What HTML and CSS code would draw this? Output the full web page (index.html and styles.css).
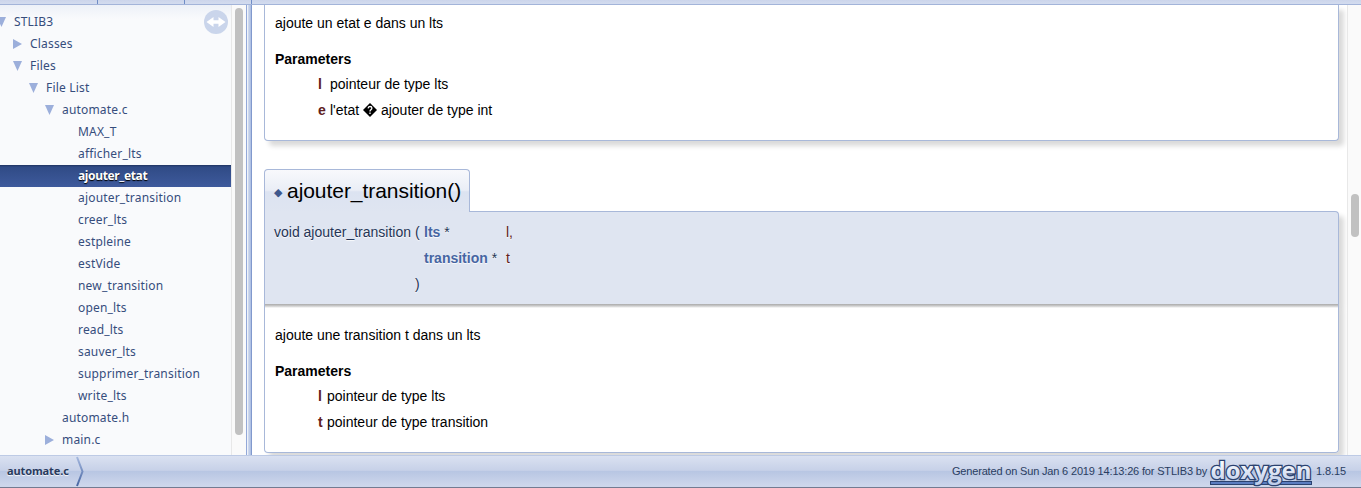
FILE: index.html
```html
<!DOCTYPE html>
<html lang="fr">
<head>
<meta charset="utf-8">
<title>STLIB3: automate.c</title>
<link rel="stylesheet" href="styles.css">
</head>
<body>
<div class="tabs"><i></i><i></i><i></i></div>
<div class="body">
  <nav class="side">
    <svg class="sync" width="24" height="24" viewBox="0 0 24 24"><circle cx="12" cy="12" r="12" fill="#cad5eb"/><path d="M2.500 12L9.500 7V10.300H14.500V7L21.500 12L14.500 17V13.700H9.500V17Z" fill="#fff"/></svg>
    <ul class="tree">
      <li class="l0 open"><span>STLIB3</span></li>
      <li class="l1 closed"><span>Classes</span></li>
      <li class="l1 open"><span>Files</span></li>
      <li class="l2 open"><span>File List</span></li>
      <li class="l3 open"><span>automate.c</span></li>
      <li class="l4"><span>MAX_T</span></li>
      <li class="l4"><span>afficher_lts</span></li>
      <li class="l4 selected"><span>ajouter_etat</span></li>
      <li class="l4"><span>ajouter_transition</span></li>
      <li class="l4"><span>creer_lts</span></li>
      <li class="l4"><span>estpleine</span></li>
      <li class="l4"><span>estVide</span></li>
      <li class="l4"><span>new_transition</span></li>
      <li class="l4"><span>open_lts</span></li>
      <li class="l4"><span>read_lts</span></li>
      <li class="l4"><span>sauver_lts</span></li>
      <li class="l4"><span>supprimer_transition</span></li>
      <li class="l4"><span>write_lts</span></li>
      <li class="l3"><span>automate.h</span></li>
      <li class="l3 closed"><span>main.c</span></li>
    </ul>
  </nav>
  <div class="scroll side-scroll"><b></b></div>
  <div class="splitter"></div>
  <main class="doc">
    <section class="card first">
      <p>ajoute un etat e dans un lts</p>
      <h3>Parameters</h3>
      <dl>
        <dt>l</dt><dd>pointeur de type lts</dd>
        <dt>e</dt><dd>l'etat <svg class="repl" width="14" height="14" viewBox="0 0 14 14"><path d="M7 0L14 7L7 14L0 7Z" fill="#000"/><path d="M5.100 5.400Q5.200 3.500 7 3.500Q8.900 3.500 8.900 5.100Q8.900 6 8 6.600Q7 7.200 7 8.500M7 9.500V11" fill="none" stroke="#fff" stroke-width="1.300"/></svg> ajouter de type int</dd>
      </dl>
    </section>
    <h2><span class="mark">◆</span><span class="name">ajouter_transition()</span></h2>
    <section class="item">
      <div class="proto">
        <span>void ajouter_transition</span><span>(</span><span class="type"><a>lts</a> *</span><span>l,</span>
        <span></span><span></span><span class="type"><a>transition</a> *</span><span>t</span>
        <span></span><span>)</span><span></span><span></span>
      </div>
      <div class="card second">
        <p>ajoute une transition t dans un lts</p>
        <h3>Parameters</h3>
        <dl class="tight">
          <dt>l</dt><dd>pointeur de type lts</dd>
          <dt>t</dt><dd>pointeur de type transition</dd>
        </dl>
      </div>
    </section>
  </main>
  <div class="scroll page-scroll"><b></b></div>
</div>
<footer>
  <span class="crumb">automate.c</span>
  <svg class="chevron" width="8" height="33" viewBox="0 0 8 33"><defs><linearGradient id="cv" x2="0" y2="1"><stop stop-color="#a4b7de"/><stop offset="1" stop-color="#4665a2"/></linearGradient></defs><path d="M1 2L6.500 16.500L1 31" fill="none" stroke="url(#cv)" stroke-width="2"/></svg>
  <span class="generated">Generated on Sun Jan 6 2019 14:13:26 for STLIB3 by</span>
  <svg class="logo" width="104" height="33" viewBox="0 0 104 33"><defs><linearGradient id="lg" x2="0" y2="1"><stop offset=".2" stop-color="#fff"/><stop offset="1" stop-color="#b8c8e8"/></linearGradient></defs><rect x="1.500" y="26.500" width="101" height="3" fill="#5b7dc0" stroke="#2b4270"/><text x="1.500" y="24" textLength="101" lengthAdjust="spacing">doxygen</text></svg>
  <span class="version">1.8.15</span>
</footer>
</body>
</html>
```
FILE: styles.css
```css
* { box-sizing: border-box; }
body {
  margin: 0;
  width: 1361px;
  height: 488px;
  overflow: hidden;
  display: grid;
  grid-template-rows: 5px 450px 33px;
  font: 14px/22px "Liberation Sans", Arial, sans-serif;
  color: #000;
  background: #fff;
}
.tabs {
  display: flex;
  background: linear-gradient(#ccd5eb, #d3dcef);
  border-bottom: 1px solid #a3b4d9;
}
.tabs i { border-right: 1px solid #6f8dc6; }
.tabs i:nth-child(1) { width: 98px; }
.tabs i:nth-child(2) { width: 87px; }
.tabs i:nth-child(3) { width: 67px; }
.body {
  display: grid;
  grid-template-columns: 231px 15px 6px 1095px 14px;
  overflow: hidden;
}
.side {
  position: relative;
  overflow: hidden;
  background: linear-gradient(#edf1f8, #f9fafc 14px);
}
.sync { position: absolute; top: 5px; right: 3px; }
.tree {
  list-style: none;
  margin: 0;
  padding: 6px 0 0;
  font: 12px/22px "Noto Sans", "Open Sans", sans-serif;
  color: #364d7c;
}
.tree li { height: 22px; display: flex; align-items: center; letter-spacing: .18px; }
.tree li::before { content: ""; width: 9px; height: 10px; margin: 0 8px 0 -17px; flex: none; }
.tree .open::before { background: #9cafdb; clip-path: polygon(0 0, 100% 0, 50% 100%); }
.tree .closed::before { background: #9cafdb; clip-path: polygon(0 0, 100% 50%, 0 100%); }
.l0 { padding-left: 14px; }
.l1 { padding-left: 30px; }
.l2 { padding-left: 46px; }
.l3 { padding-left: 62px; }
.l4 { padding-left: 78px; }
.tree .selected {
  color: #fff;
  font-weight: bold;
  letter-spacing: -.35px;
  background: linear-gradient(#1f3361, #304b86 2px, #3e5a9c);
  text-shadow: 0 1px 1px #000;
}
.scroll {
  background: #fafafa;
  border-left: 1px solid #e8e8e8;
}
.scroll b { display: block; width: 8px; margin-left: 3px; border-radius: 4px; background: #c1c1c1; }
.side-scroll b { height: 427px; margin-top: 3px; }
.page-scroll b { height: 43px; margin-top: 189px; }
.splitter {
  border-left: 1px solid #93a8d8;
  border-right: 1px solid #8199cd;
  background: linear-gradient(90deg, #fff, #cbd6ec 40%, #a9bce2);
}
.doc { padding: 0 8px 0 12px; overflow: hidden; }
.card {
  background: #fff;
  border: 1px solid #a8b8d9;
  border-top: 0;
  border-radius: 0 0 4px 4px;
  box-shadow: 5px 5px 5px rgba(0, 0, 0, .15);
  padding: 0 10px;
}
.first { height: 136px; padding-top: 7px; }
.card p { margin: 0; }
.card h3 { margin: 14px 0 0; font-size: 14px; line-height: 22px; }
dl {
  margin: 0 0 0 43px;
  display: grid;
  grid-template-columns: 12px 1fr;
  grid-auto-rows: 26px;
  line-height: 26px;
  padding-top: 1px;
}
.tight { grid-template-columns: 9px 1fr; }
dt { font-weight: bold; color: #602020; }
dd { margin: 0; }
.repl { vertical-align: -2px; }
h2 {
  position: relative;
  display: flex;
  align-items: center;
  width: 206px;
  height: 43px;
  margin: 28px 0 -1px;
  padding-left: 9px;
  border: 1px solid #a8b8d9;
  border-bottom: 0;
  border-radius: 4px 4px 0 0;
  background: linear-gradient(#f8f9fc, #eaeef6 48%, #dce3f1 52%, #dfe5f1);
  font-size: 21px;
  font-weight: normal;
  line-height: 42px;
}
.mark { font: 11px/42px "DejaVu Sans", sans-serif; color: #3d578c; width: 13px; padding-top: 4px; }
.name { white-space: nowrap; letter-spacing: -.05px; }
.proto {
  display: grid;
  grid-template-columns: 141px 9px 82px 1fr;
  grid-auto-rows: 26px;
  height: 93px;
  padding: 7px 9px;
  line-height: 26px;
  color: #253555;
  white-space: nowrap;
  background: #dfe5f1;
  border: 1px solid #a8b8d9;
  border-bottom: 0;
  border-radius: 0 4px 0 0;
  box-shadow: 5px 5px 5px rgba(0, 0, 0, .15);
  text-shadow: 0 1px 1px rgba(255, 255, 255, .9);
}
.proto > span:nth-child(4n) { color: #602020; }
.proto a { color: #4665a2; font-weight: bold; }
.second {
  height: 149px;
  padding-top: 20px;
  background: linear-gradient(#aaa, #ccc 2px, #fff 4px);
}
footer {
  position: relative;
  display: flex;
  align-items: center;
  background: linear-gradient(#dae1f1, #c7d1e8 46%, #b8c6e3 50%, #cdd6eb 95%);
  border-top: 1px solid #bdcae5;
  border-bottom: 1px solid #737b91;
  font-size: 11px;
  color: #2a3d61;
  white-space: nowrap;
}
.crumb {
  width: 76px;
  padding: 0 0 2px 7px;
  font: bold 11px/30px "Noto Sans", "Open Sans", sans-serif;
  letter-spacing: -.1px;
  color: #283a5d;
  text-shadow: 0 1px 1px rgba(255, 255, 255, .9);
}
.generated { margin-left: auto; letter-spacing: -.17px; padding-bottom: 2px; }
.logo { margin: 0 3px 0 2px; flex: none; overflow: visible; }
.logo text {
  font: bold 24px "Open Sans", "Noto Sans", sans-serif;
  fill: url(#lg);
  stroke: #2b4270;
  stroke-width: 2.600px;
  paint-order: stroke;
}
.version { width: 45px; padding-bottom: 2px; letter-spacing: -.1px; }
```
